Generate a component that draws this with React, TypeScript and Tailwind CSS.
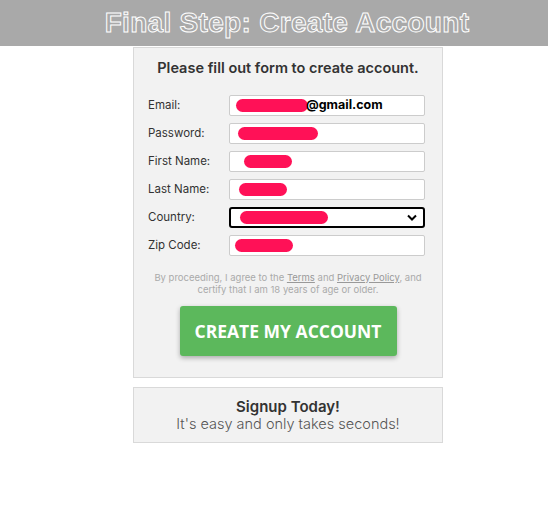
import React from "react";

const Blob = ({ w, ml = 0 }: { w: number; ml?: number }) => (
  <span
    className="inline-block h-[13px] rounded-full bg-[#ff1157]"
    style={{ width: w, marginLeft: ml }}
  />
);

const Field = ({ label, children, select }: { label: string; children: React.ReactNode; select?: boolean }) => (
  <div className="flex items-center h-[21px]">
    <span className="w-[81px] text-[11.5px] text-[#333]">{label}</span>
    <div
      className={
        select
          ? "flex items-center w-[196px] h-[21px] bg-white border-2 border-black rounded-[3px] px-[6px]"
          : "flex items-center w-[196px] h-[21px] bg-white border border-[#ccc] rounded-[2px] px-[6px]"
      }
    >
      {children}
      {select && (
        <svg className="ml-auto" width="10" height="7" viewBox="0 0 10 7">
          <path d="M1 1.5 L5 5.5 L9 1.5" stroke="#000" strokeWidth="2" fill="none" />
        </svg>
      )}
    </div>
  </div>
);

export default function App() {
  return (
    <div className="w-[548px] h-[508px] bg-white font-['Inter',sans-serif]">
      <div className="h-[46px] bg-[#a9a9a9] flex items-center justify-center pl-[26px]">
        <h1 className="font-['Liberation_Sans',Arial,sans-serif] font-bold text-[28px] tracking-[0.3px] text-[#a9a9a9] [-webkit-text-stroke:1px_#fff]">
          Final Step: Create Account
        </h1>
      </div>

      <div className="ml-[133px] mt-[1px] w-[310px] h-[331px] bg-[#f2f2f2] border border-[#d9d9d9] px-[14px] pt-[9px]">
        <h2 className="text-center text-[14.5px] font-semibold text-[#333]">
          Please fill out form to create account.
        </h2>
        <div className="flex flex-col gap-[7px] mt-[16px]">
          <Field label="Email:">
            <Blob w={72} ml={0} />
            <span className="text-[12.5px] font-bold text-black -ml-[2px]">@gmail.com</span>
          </Field>
          <Field label="Password:">
            <Blob w={80} ml={2} />
          </Field>
          <Field label="First Name:">
            <Blob w={48} ml={8} />
          </Field>
          <Field label="Last Name:">
            <Blob w={48} ml={3} />
          </Field>
          <Field label="Country:" select>
            <Blob w={88} ml={3} />
          </Field>
          <Field label="Zip Code:">
            <Blob w={58} ml={-1} />
          </Field>
        </div>
        <p className="mt-[16px] text-center text-[9.5px] leading-[12px] text-[#aaa]">
          By proceeding, I agree to the <span className="underline text-[#999]">Terms</span> and{" "}
          <span className="underline text-[#999]">Privacy Policy</span>, and
          <br />
          certify that I am 18 years of age or older.
        </p>
        <div className="flex justify-center mt-[10px]">
          <button className="w-[217px] h-[50px] bg-[#5cb85c] rounded-[3px] text-white font-['Open_Sans',sans-serif] font-bold text-[17.5px] shadow-[0_2px_5px_rgba(0,0,0,0.3)]">
            CREATE MY ACCOUNT
          </button>
        </div>
      </div>

      <div className="ml-[133px] mt-[9px] w-[310px] h-[56px] bg-[#f2f2f2] border border-[#d9d9d9] flex flex-col items-center justify-center">
        <div className="text-[15px] font-semibold text-[#333] leading-[17px]">Signup Today!</div>
        <div className="text-[14.5px] font-light text-[#555] leading-[17px]">It's easy and only takes seconds!</div>
      </div>
    </div>
  );
}
